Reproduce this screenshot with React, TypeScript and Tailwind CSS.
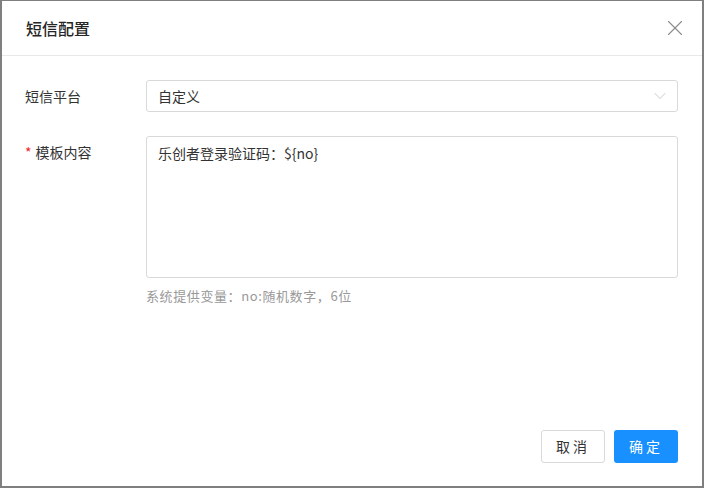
import { X, ChevronDown } from 'lucide-react';

export default function App() {
  return (
    <div
      className="w-[704px] h-[488px] bg-[#7f7f7f] pl-[2px] pt-[1px] overflow-hidden"
      style={{ fontFamily: '"Noto Sans CJK SC", "Noto Sans", sans-serif' }}
    >
      <div className="w-[700px] h-[485px] bg-white flex flex-col">
        <div className="h-[55px] border-b border-[#e8e8e8] flex items-center justify-between pl-[24px] pr-[14px]">
          <h1 className="text-[16px] font-medium text-[#262626]">短信配置</h1>
          <X className="w-[26px] h-[26px] text-[#8c8c8c]" strokeWidth={1} />
        </div>

        <div className="flex-1 pt-[24px] pr-[24px]">
          <div className="flex items-center">
            <label className="w-[144px] pl-[23px] text-[14px] text-[#333]">短信平台</label>
            <div className="flex-1 h-[32px] border border-[#d9d9d9] rounded-[3px] flex items-center justify-between pl-[11px] pr-[7px]">
              <span className="text-[14px] text-[#333]">自定义</span>
              <ChevronDown className="w-[20px] h-[20px] text-[#bfbfbf]" strokeWidth={1} />
            </div>
          </div>

          <div className="flex mt-[24px]">
            <label className="w-[144px] pl-[23px] text-[14px] text-[#333] pt-[6px]">
              <span className="text-[#f5222d] mr-[4px]">*</span>模板内容
            </label>
            <div className="flex-1">
              <div className="h-[142px] border border-[#d9d9d9] rounded-[3px] px-[11px] pt-[6px] text-[14px] text-[#333]">
                乐创者登录验证码：${'{no}'}
              </div>
              <p className="mt-[8px] text-[13px] text-[#999] tracking-[0.6px]">系统提供变量：no:随机数字，6位</p>
            </div>
          </div>
        </div>

        <div className="flex justify-end gap-[9px] pr-[24px] pb-[23px]">
          <button className="w-[64px] h-[33px] border border-[#d9d9d9] rounded-[3px] text-[14px] text-[#333] bg-white tracking-[3px]">
            取消
          </button>
          <button className="w-[64px] h-[33px] rounded-[3px] text-[14px] text-white bg-[#1890ff] tracking-[3px]">
            确定
          </button>
        </div>
      </div>
    </div>
  );
}
